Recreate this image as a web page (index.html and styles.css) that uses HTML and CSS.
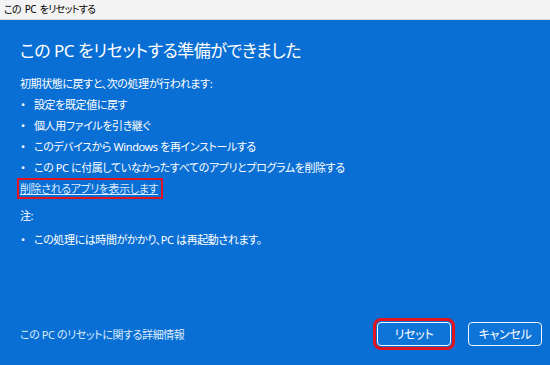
FILE: index.html
```html
<!DOCTYPE html>
<html lang="ja">
<head>
<meta charset="utf-8">
<title>この PC をリセットする</title>
<link rel="stylesheet" href="styles.css">
</head>
<body>
<div class="window">
  <div class="titlebar">この PC をリセットする</div>
  <div class="content">
    <h1 class="heading">この PC をリセットする準備ができました</h1>
    <p class="line">初期状態に戻すと、次の処理が行われます:</p>
    <ul class="bullets">
      <li><span class="dot">•</span>設定を既定値に戻す</li>
      <li><span class="dot">•</span>個人用ファイルを引き継ぐ</li>
      <li><span class="dot">•</span>このデバイスから Windows を再インストールする</li>
      <li><span class="dot">•</span>この PC に付属していなかったすべてのアプリとプログラムを削除する</li>
    </ul>
    <div class="linkrow"><a class="applink marked" href="#">削除されるアプリを表示します</a></div>
    <p class="line note">注:</p>
    <ul class="bullets last">
      <li><span class="dot">•</span>この処理には時間がかかり、PC は再起動されます。</li>
    </ul>
    <div class="spacer"></div>
    <div class="footer">
      <a class="info" href="#">この PC のリセットに関する詳細情報</a>
      <div class="buttons">
        <button class="btn marked-btn">リセット</button>
        <button class="btn">キャンセル</button>
      </div>
    </div>
  </div>
</div>
</body>
</html>
```
FILE: styles.css
```css
html, body {
  margin: 0;
  padding: 0;
}
body {
  width: 550px;
  height: 365px;
  overflow: hidden;
  font-family: "Noto Sans", "Noto Sans CJK JP", sans-serif;
  font-feature-settings: "palt";
}
.window {
  display: flex;
  flex-direction: column;
  height: 365px;
}
.titlebar {
  height: 20px;
  line-height: 19px;
  background: #f3f3f3;
  border-bottom: 1px solid #d8d8d8;
  color: #000;
  font-size: 10px;
  letter-spacing: -0.7px;
  word-spacing: 2px;
  padding-left: 4px;
  box-sizing: border-box;
}
.content {
  flex: 1;
  background: #0a6fd4;
  color: #fff;
  display: flex;
  flex-direction: column;
  padding: 0 8px 0 20px;
  font-size: 11px;
  letter-spacing: -0.4px;
}
.heading {
  margin: 17px 0 0 0;
  font-size: 17px;
  letter-spacing: -0.5px;
  font-weight: 400;
  line-height: 28px;
}
.line {
  margin: 8px 0 0 0;
  line-height: 21px;
}
.bullets {
  list-style: none;
  margin: 0;
  padding: 0;
  line-height: 21px;
}
.bullets li {
  display: flex;
}
.dot {
  width: 13px;
  flex: none;
  padding-left: 1px;
}
.linkrow {
  line-height: 21px;
}
.applink {
  color: #dcebfb;
  text-decoration: underline;
}
.marked {
  outline: 2px solid #e4141e;
  outline-offset: 1px;
  padding: 0 2px 0 0;
}
.note {
  margin-top: 6px;
}
.last {
  margin-top: 3px;
}
.spacer {
  flex: 1;
}
.footer {
  display: flex;
  align-items: center;
  justify-content: space-between;
  margin-bottom: 19px;
}
.info {
  color: #dcebfb;
  text-decoration: none;
}
.buttons {
  display: flex;
  gap: 17px;
}
.btn {
  width: 74px;
  height: 24px;
  background: #0f74d8;
  border: 1px solid #f0f6fd;
  border-radius: 4px;
  color: #fff;
  font-family: "Noto Sans", "Noto Sans CJK JP", sans-serif;
  font-feature-settings: "palt";
  font-size: 12px;
  letter-spacing: -0.3px;
  padding: 0;
}
.marked-btn {
  outline: 3px solid #e4141e;
  outline-offset: 1px;
}
```
